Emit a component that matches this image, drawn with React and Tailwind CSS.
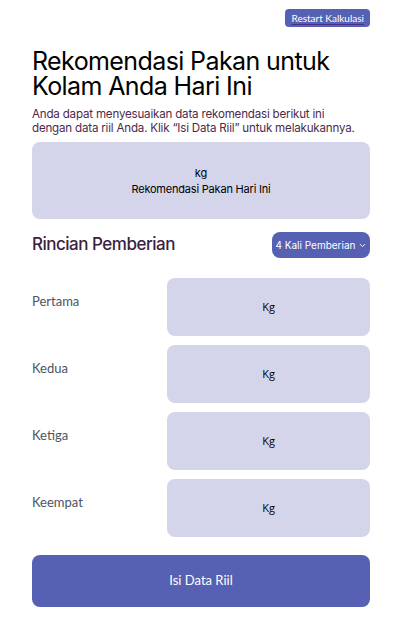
import { ChevronDown } from 'lucide-react';

const rows = ['Pertama', 'Kedua', 'Ketiga', 'Keempat'];

export default function App() {
  return (
    <div className="min-h-[619px] bg-white pl-8 pr-[34px] pt-[9px] pb-3" style={{ fontFamily: 'Inter, "Noto Sans", sans-serif' }}>
      {/* Top action */}
      <div className="flex justify-end">
        <button className="h-[18px] px-[6px] rounded bg-[#5661b3] text-white text-[10px] leading-none underline decoration-[#4b2c8c] underline-offset-2" style={{ fontFamily: 'Lato, sans-serif' }}>
          Restart Kalkulasi
        </button>
      </div>

      {/* Heading */}
      <h1 className="mt-[22px] text-[25px] leading-[25px] tracking-[-0.6px] text-black font-normal">
        Rekomendasi Pakan untuk
        <br />
        Kolam Anda Hari Ini
      </h1>
      <p className="mt-[8px] text-[11.6px] leading-[14px] text-[#4e2a4c] tracking-[-0.2px]">
        Anda dapat menyesuaikan data rekomendasi berikut ini
        <br />
        dengan data riil Anda. Klik “Isi Data Riil” untuk melakukannya.
      </p>

      {/* Summary card */}
      <div className="mt-[7px] h-[77px] rounded-lg bg-[#d4d5ea] flex flex-col items-center justify-center text-[11px] text-black">
        <div className="leading-[16px]">kg</div>
        <div className="leading-[16px] tracking-[-0.2px]">Rekomendasi Pakan Hari Ini</div>
      </div>

      {/* Section header */}
      <div className="mt-[13px] flex items-center justify-between">
        <h2 className="text-[17px] font-medium tracking-[-0.5px] text-[#3b2240]">Rincian Pemberian</h2>
        <button className="h-[26px] w-[98px] rounded-lg bg-[#5661b3] text-white text-[10px] flex items-center justify-center gap-[2px]">
          4 Kali Pemberian
          <ChevronDown size={9} strokeWidth={2.5} />
        </button>
      </div>

      {/* Feeding rows */}
      <div className="mt-[20px] flex flex-col gap-[9px]">
        {rows.map((label) => (
          <div key={label} className="flex">
            <div className="w-[135px] pt-[14px] text-[13px] text-[#4a5463]" style={{ fontFamily: 'Lato, sans-serif' }}>
              {label}
            </div>
            <div className="flex-1 h-[58px] rounded-lg bg-[#d4d5ea] flex items-center justify-center text-[11px] text-black" style={{ fontFamily: '"Open Sans", sans-serif' }}>
              Kg
            </div>
          </div>
        ))}
      </div>

      {/* Primary action */}
      <button className="mt-[18px] w-full h-[52px] rounded-lg bg-[#5661b3] text-white text-[13px]" style={{ fontFamily: 'Lato, sans-serif' }}>
        Isi Data Riil
      </button>
    </div>
  );
}
